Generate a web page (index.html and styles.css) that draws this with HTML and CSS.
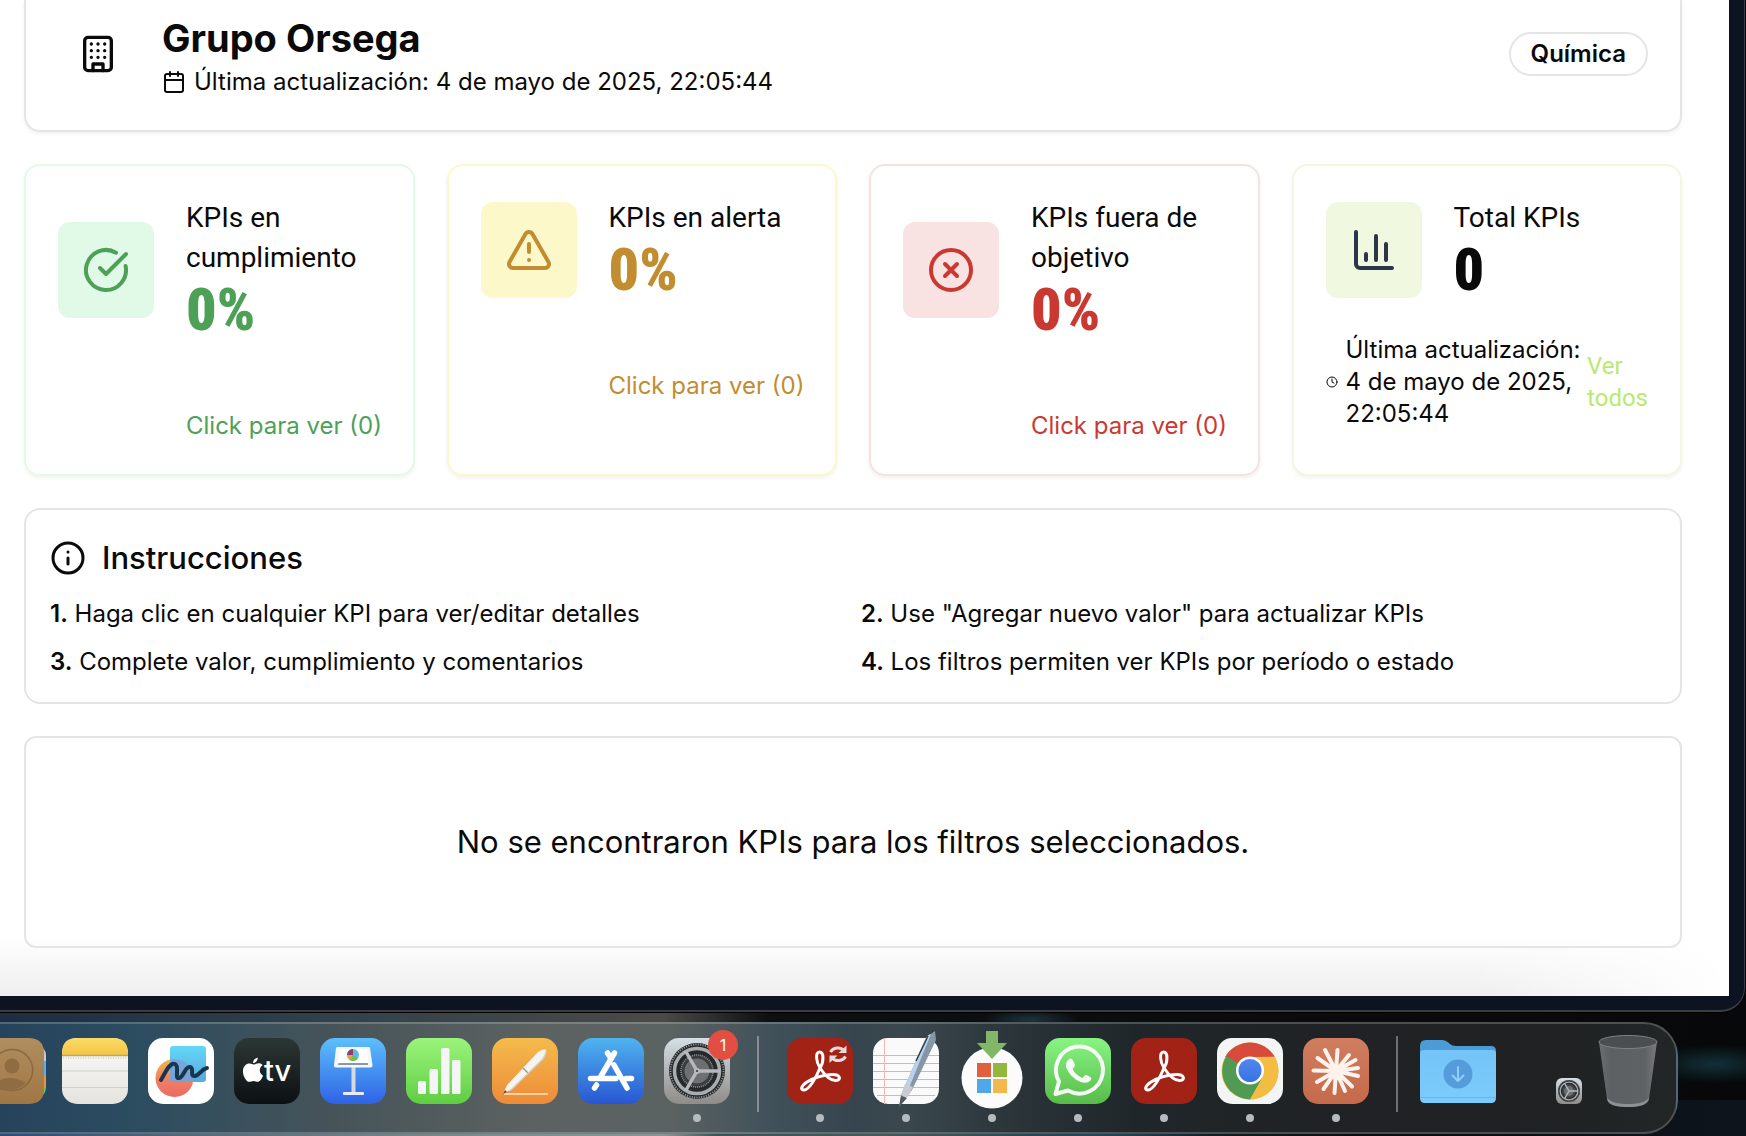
FILE: index.html
```html
<!DOCTYPE html>
<html lang="es">
<head>
<meta charset="utf-8">
<title>Grupo Orsega</title>
<link rel="stylesheet" href="styles.css">
</head>
<body>
<svg class="defs" width="0" height="0" aria-hidden="true">
  <defs>
    <linearGradient id="g-contacts" x1="0" y1="0" x2="0" y2="1"><stop offset="0" stop-color="#b08e5f"/><stop offset="1" stop-color="#a07645"/></linearGradient>
    <linearGradient id="g-notes" x1="0" y1="0" x2="0" y2="1"><stop offset="0" stop-color="#fadb66"/><stop offset="1" stop-color="#f5c544"/></linearGradient>
    <linearGradient id="g-paper" x1="0" y1="0" x2="0" y2="1"><stop offset="0" stop-color="#fbfbfa"/><stop offset="1" stop-color="#e4e3de"/></linearGradient>
    <linearGradient id="g-sun" x1="0" y1="0" x2="0" y2="1"><stop offset="0" stop-color="#f2b548"/><stop offset=".5" stop-color="#f08362"/><stop offset="1" stop-color="#ea6a66"/></linearGradient>
    <linearGradient id="g-sky" x1="0" y1="0" x2="0" y2="1"><stop offset="0" stop-color="#62d8f8"/><stop offset="1" stop-color="#5aa9dc"/></linearGradient>
    <linearGradient id="g-tv" x1="0" y1="0" x2="0" y2="1"><stop offset="0" stop-color="#2c3735"/><stop offset="1" stop-color="#0c1013"/></linearGradient>
    <linearGradient id="g-keynote" x1="0" y1="0" x2="0" y2="1"><stop offset="0" stop-color="#5cc0fb"/><stop offset="1" stop-color="#2f62e6"/></linearGradient>
    <linearGradient id="g-numbers" x1="0" y1="0" x2="0" y2="1"><stop offset="0" stop-color="#9bf47c"/><stop offset="1" stop-color="#5fce41"/></linearGradient>
    <linearGradient id="g-pages" x1="0" y1="0" x2="0" y2="1"><stop offset="0" stop-color="#f4bb4c"/><stop offset="1" stop-color="#ee8b38"/></linearGradient>
    <linearGradient id="g-store" x1="0" y1="0" x2="0" y2="1"><stop offset="0" stop-color="#4fb4ee"/><stop offset="1" stop-color="#2856d3"/></linearGradient>
    <linearGradient id="g-metal" x1="0" y1="0" x2="0" y2="1"><stop offset="0" stop-color="#d5dfe5"/><stop offset="1" stop-color="#8f8c89"/></linearGradient>
    <linearGradient id="g-wa" x1="0" y1="0" x2="0" y2="1"><stop offset="0" stop-color="#88f583"/><stop offset="1" stop-color="#57bb49"/></linearGradient>
    <linearGradient id="g-blue" x1="0" y1="0" x2="0" y2="1"><stop offset="0" stop-color="#4f87ee"/><stop offset="1" stop-color="#3a73e2"/></linearGradient>
    <linearGradient id="g-claude" x1="0" y1="0" x2="0" y2="1"><stop offset="0" stop-color="#d07d60"/><stop offset="1" stop-color="#c56a4b"/></linearGradient>
    <linearGradient id="g-folder" x1="0" y1="0" x2="0" y2="1"><stop offset="0" stop-color="#74c4f8"/><stop offset="1" stop-color="#7bcbfc"/></linearGradient>
    <linearGradient id="g-trash" x1="0" y1="0" x2="1" y2="0"><stop offset="0" stop-color="#6c6f72"/><stop offset=".2" stop-color="#5d6063"/><stop offset=".8" stop-color="#5f6265"/><stop offset="1" stop-color="#78797b"/></linearGradient>
    <symbol id="gear" viewBox="0 0 66 66">
      <rect width="66" height="66" rx="15" fill="url(#g-metal)"/>
      <circle cx="33" cy="33" r="28" fill="#26292b"/>
      <circle cx="33" cy="33" r="26.500" fill="none" stroke="#8c9092" stroke-width="2" stroke-dasharray="1.200 1.200"/>
      <circle cx="33" cy="33" r="22.500" fill="none" stroke="#a9adaf" stroke-width="3.500"/>
      <circle cx="33" cy="33" r="14.500" fill="#6d6f70" stroke="#3a3d3f" stroke-width="4"/>
      <circle cx="33" cy="33" r="16" fill="none" stroke="#8c9092" stroke-width="1.500" stroke-dasharray="1 1"/>
      <path d="M33 33H56M33 33L21.500 13M33 33L21.500 53" stroke="#b5b9bb" stroke-width="3.500"/>
      <circle cx="33" cy="33" r="3" fill="#b5b9bb"/><circle cx="33" cy="33" r="1" fill="#333"/>
    </symbol>
    <symbol id="acrobat" viewBox="0 0 66 66">
      <rect width="66" height="66" rx="15" fill="#a32216"/>
      <path d="M33 30C37 24 37 14 32.500 14C28 14 29 24 33 30C37 36 43 43 49 42.500C55 42 53 36 45 36.500C37 37 28 39 20 44C14 48 13 52 17 52C22 52 29 40 33 30Z" fill="none" stroke="#fff" stroke-width="3" stroke-linejoin="round"/>
    </symbol>
  </defs>
</svg>

<div class="window">
  <main class="page">
    <header class="card company">
      <div class="company-icon">
        <svg class="icon-40" viewBox="0 0 24 24"><rect x="4" y="2" width="16" height="20" rx="2"/><path d="M9 22v-4h6v4M8 6h.01M16 6h.01M12 6h.01M12 10h.01M12 14h.01M16 10h.01M16 14h.01M8 10h.01M8 14h.01"/></svg>
      </div>
      <div class="company-text">
        <h1>Grupo Orsega</h1>
        <p class="updated">
          <svg class="icon-24" viewBox="0 0 24 24"><path d="M8 2v4M16 2v4M3 10h18"/><rect x="3" y="4" width="18" height="18" rx="2"/></svg>
          Última actualización: 4 de mayo de 2025, 22:05:44
        </p>
      </div>
      <span class="badge">Química</span>
    </header>

    <section class="kpis">
      <article class="card kpi ok">
        <div class="kpi-head">
          <div class="tile"><svg class="icon-48" viewBox="0 0 24 24"><path d="M21.801 10A10 10 0 1 1 17 3.335"/><path d="m9 11 3 3L22 4"/></svg></div>
          <div><h2>KPIs en cumplimiento</h2><p class="value">0%</p></div>
        </div>
        <button class="view" type="button">Click para ver (0)</button>
      </article>
      <article class="card kpi warn">
        <div class="kpi-head">
          <div class="tile"><svg class="icon-48" viewBox="0 0 24 24"><path d="m21.730 18-8-14a2 2 0 0 0-3.480 0l-8 14A2 2 0 0 0 4 21h16a2 2 0 0 0 1.730-3M12 9v4M12 17h.01"/></svg></div>
          <div><h2>KPIs en alerta</h2><p class="value">0%</p></div>
        </div>
        <button class="view" type="button">Click para ver (0)</button>
      </article>
      <article class="card kpi bad">
        <div class="kpi-head">
          <div class="tile"><svg class="icon-48" viewBox="0 0 24 24"><circle cx="12" cy="12" r="10"/><path d="m15 9-6 6M9 9l6 6"/></svg></div>
          <div><h2>KPIs fuera de objetivo</h2><p class="value">0%</p></div>
        </div>
        <button class="view" type="button">Click para ver (0)</button>
      </article>
      <article class="card kpi total">
        <div class="kpi-head">
          <div class="tile"><svg class="icon-48" viewBox="0 0 24 24"><path d="M3 3v16a2 2 0 0 0 2 2h16M18 17V9M13 17V5M8 17v-3"/></svg></div>
          <div><h2>Total KPIs</h2><p class="value">0</p></div>
        </div>
        <div class="kpi-foot">
          <svg class="icon-12" viewBox="0 0 24 24"><circle cx="12" cy="12" r="10"/><path d="M12 6v6l4 2"/></svg>
          <p>Última actualización: 4 de mayo de 2025, 22:05:44</p>
          <a class="all" href="#todos">Ver todos</a>
        </div>
      </article>
    </section>

    <section class="card help">
      <h2><svg class="icon-36" viewBox="0 0 24 24"><circle cx="12" cy="12" r="10"/><path d="M12 16v-4M12 8h.01"/></svg>Instrucciones</h2>
      <div class="steps">
        <p><strong>1.</strong> Haga clic en cualquier KPI para ver/editar detalles</p>
        <p><strong>2.</strong> Use "Agregar nuevo valor" para actualizar KPIs</p>
        <p><strong>3.</strong> Complete valor, cumplimiento y comentarios</p>
        <p><strong>4.</strong> Los filtros permiten ver KPIs por período o estado</p>
      </div>
    </section>

    <section class="card empty"><p>No se encontraron KPIs para los filtros seleccionados.</p></section>
  </main>
</div>

<nav class="dock">
  <div class="apps">
    <button class="app cut" type="button" aria-label="Contactos">
      <svg width="46" height="66" viewBox="0 0 46 66"><path d="M30 8h8q8 2 8 9v6H30z" fill="#c9c9c9"/><path d="M30 23h16v14H30z" fill="#54b3ef"/><path d="M30 37h16v12H30z" fill="#f09332"/><path d="M30 49h16q0 7-6 10H30z" fill="#62d162"/><path d="M0 0h28q16 0 16 15v36q0 15-16 15H0z" fill="url(#g-contacts)"/><g fill="none" stroke="#8b683e" stroke-width="1.500"><path d="M0 15.500A20.500 20.500 0 1 1 0 48.500"/></g><circle cx="12" cy="28" r="7.500" fill="#8f6c42"/><path d="M0 42q12-5 26 3q-10 9-26 7z" fill="#8f6c42"/></svg>
    </button>
    <button class="app" type="button" aria-label="Notas">
      <svg width="66" height="66" viewBox="0 0 66 66"><rect width="66" height="66" rx="15" fill="url(#g-paper)"/><path d="M0 17V15Q0 0 15 0H51Q66 0 66 15V17Z" fill="url(#g-notes)"/><path d="M0 17.500H66" stroke="#b5a67c" stroke-width="1.500"/><path d="M1 20H65" stroke="#bdbdbd" stroke-dasharray="1 1.500"/><path d="M0 33H66M0 49.500H66" stroke="#d0d0ce"/></svg>
    </button>
    <button class="app" type="button" aria-label="Freeform">
      <svg width="66" height="66" viewBox="0 0 66 66"><rect width="66" height="66" rx="15" fill="#fff"/><circle cx="26.500" cy="40" r="19" fill="url(#g-sun)"/><rect x="22" y="8" width="36" height="36" rx="3" fill="url(#g-sky)"/><path d="M22 21.500A19 19 0 0 1 45 44H25Q22 44 22 41Z" fill="#7f9fd3" opacity=".8"/><path d="M13 42C18 33 22 24 27 26C32 28 26 41 31 40C36 39 37 28 42 29C47 30 41 39 47 38C52 37 53 31 59 30" fill="none" stroke="#17364f" stroke-width="4" stroke-linecap="round"/></svg>
    </button>
    <button class="app" type="button" aria-label="Apple TV">
      <svg width="66" height="66" viewBox="0 0 66 66"><rect width="66" height="66" rx="15" fill="url(#g-tv)"/><path d="M19.500 26.500C21.500 26.500 23 25 25.500 25.300C27 25.500 28 26.200 28.600 27.200C24.500 30 25 35.500 29 37.500C28 41 25.500 44 23.500 43.800C22 43.600 21.300 42.900 19.500 42.900C17.700 42.900 17 43.700 15.500 43.800C12 44 8.500 37 9 32.500C9.300 28 12.500 25.300 15.800 25.500C17.500 25.600 18.500 26.500 19.500 26.500ZM19 25C19 22.500 21 20 23.800 19.700C24 22.300 22 25 19 25Z" fill="#fff"/><text class="tv-text" x="30" y="43">tv</text></svg>
    </button>
    <button class="app" type="button" aria-label="Keynote">
      <svg width="66" height="66" viewBox="0 0 66 66"><rect width="66" height="66" rx="15" fill="url(#g-keynote)"/><path d="M31.500 29h4v26h-4z" fill="#d6dae0"/><rect x="23" y="54" width="21" height="3" rx="1" fill="#e8ebef"/><path d="M16 10q.3-1 1.500-1h31q1.200 0 1.500 1l2.500 17q.2 2.500-2 2.500H16q-2.300 0-2-2.500z" fill="#f4f6f8"/><path d="M20 11h27l1 14H18.500z" fill="#fff"/><path d="M18.500 25h29.500v2H18z" fill="#8b98a5"/><circle cx="33" cy="17" r="6" fill="#62b8ea"/><path d="M33 17V11A6 6 0 0 0 27 17Z" fill="#8e3f74"/><path d="M33 17H27A6 6 0 0 0 30 22Z" fill="#f0a23c"/><path d="M33 17L30 22.200A6 6 0 0 0 38 20Z" fill="#6fc04e"/></svg>
    </button>
    <button class="app" type="button" aria-label="Numbers">
      <svg width="66" height="66" viewBox="0 0 66 66"><rect width="66" height="66" rx="15" fill="url(#g-numbers)"/><g fill="#f3f6f4"><rect x="12" y="43" width="8" height="13" rx="1.500"/><rect x="23.500" y="31" width="8.500" height="25" rx="1.500"/><rect x="35" y="10" width="8.500" height="46" rx="1.500"/><rect x="46" y="22" width="8.500" height="34" rx="1.500"/></g></svg>
    </button>
    <button class="app" type="button" aria-label="Pages">
      <svg width="66" height="66" viewBox="0 0 66 66"><rect width="66" height="66" rx="15" fill="url(#g-pages)"/><path d="M12 56H56" stroke="#fbd3a4" stroke-width="2"/><path d="M11 56L15 47L46 14Q52 10 54 12Q55 15 51 21L20 51Z" fill="#f6f4f2"/><path d="M31 30l5 5" stroke="#a39a90" stroke-width="1.500"/><path d="M11 56l2-4 2 2z" fill="#5b4a3a"/><path d="M54 13Q54 17 50 22L20 51L17 53" fill="none" stroke="#d3cbc3" stroke-width="1.500"/></svg>
    </button>
    <button class="app" type="button" aria-label="App Store">
      <svg width="66" height="66" viewBox="0 0 66 66"><rect width="66" height="66" rx="15" fill="url(#g-store)"/><g stroke="#fff" stroke-width="5.500" stroke-linecap="round"><path d="M36.500 15L22.500 39M18.500 47L16.500 50M29.500 15L32 19M36 27L49 50M12.500 40.500H38M48 40.500H53.500"/></g></svg>
    </button>
    <button class="app open" type="button" aria-label="Ajustes del Sistema">
      <svg width="66" height="66"><use href="#gear"/></svg>
      <span class="count">1</span>
    </button>
  </div>
  <div class="divider"></div>
  <div class="apps">
    <button class="app open" type="button" aria-label="Acrobat Update">
      <svg width="66" height="66" viewBox="0 0 66 66"><use href="#acrobat"/><g fill="none" stroke="#e3dcdb" stroke-width="3"><path d="M43.500 14A8 7 0 0 1 57 12.500M58.500 18.500A8 7 0 0 1 45 20"/></g><path d="M59.500 7.500V15H51.500ZM42.500 25V17.500H50.500Z" fill="#e3dcdb"/></svg>
    </button>
    <button class="app open" type="button" aria-label="TextEdit">
      <svg width="66" height="66" viewBox="0 0 66 66"><rect width="66" height="66" rx="15" fill="#fafafa"/><path d="M0 17.500H66M0 25.500H66M0 33.500H66M0 41.500H66M0 49.500H66M4 57.500H62" stroke="#bfbfbf"/><path d="M11.500 0V66" stroke="#f2b8b4"/><path d="M26 69L28 57L52 2Q54-3 58-4L62-7L63 2L39 52Z" fill="#8796a6"/><path d="M30 52L52 2Q54-3 58-4L36 50Z" fill="#b9d2ea"/><path d="M43 23L55-2" stroke="#2f3f50" stroke-width="1.500"/><path d="M26 69L28 58L34 60Z" fill="#55585c"/><path d="M28 57L32 46L40 49L34 60Z" fill="#c9ccd0"/></svg>
    </button>
    <button class="app open" type="button" aria-label="Microsoft AutoUpdate">
      <svg width="66" height="66" viewBox="0 0 66 66"><circle cx="33" cy="40" r="30.500" fill="#fbfbfb"/><path d="M27-7H39V5H48L33 21L18 5H27Z" fill="#82b768"/><path d="M18 25H32V39H18Z" fill="#e05f3c"/><path d="M34 25H48V39H34Z" fill="#93b73d"/><path d="M18 41H32V55H18Z" fill="#4fa6e8"/><path d="M34 41H48V55H34Z" fill="#f2b84c"/></svg>
    </button>
    <button class="app open" type="button" aria-label="WhatsApp">
      <svg width="66" height="66" viewBox="0 0 66 66"><rect width="66" height="66" rx="15" fill="url(#g-wa)"/><path d="M10.500 56L14 43.500A23.500 23.500 0 1 1 23 52.500Z" fill="none" stroke="#f6faf5" stroke-width="4" stroke-linejoin="round"/><path d="M25 20.500Q27 20 28 22.500L30 27Q30.300 28.500 27.500 31Q30.500 37 37.500 40Q39.500 36.500 41.500 37L46 39.500Q47 41 45.500 42.500Q42 46 36 44Q25 40 21 29Q20 23.500 25 20.500Z" fill="#f6faf5"/></svg>
    </button>
    <button class="app open" type="button" aria-label="Acrobat">
      <svg width="66" height="66"><use href="#acrobat"/></svg>
    </button>
    <button class="app open" type="button" aria-label="Chrome">
      <svg width="66" height="66" viewBox="0 0 66 66"><rect width="66" height="66" rx="15" fill="#f3f4f4"/><circle cx="33" cy="33" r="28.500" fill="#f2bd42"/><path d="M33 33L8.300 18.800A28.500 28.500 0 0 1 57.700 18.800L33 19Z" fill="#d64b3b"/><path d="M33 33L9.500 18A28.500 28.500 0 0 0 33 61.500L46 40Z" fill="#509a54"/><path d="M33 19.500H58A28.500 28.500 0 0 1 33 61.500L45 40Z" fill="#f2bd42"/><circle cx="33" cy="32.500" r="14" fill="#fff"/><circle cx="33" cy="32.500" r="11.500" fill="url(#g-blue)"/></svg>
    </button>
    <button class="app open" type="button" aria-label="Claude">
      <svg width="66" height="66" viewBox="0 0 66 66"><rect width="66" height="66" rx="15" fill="url(#g-claude)"/><g stroke="#fdf3ec" stroke-width="4" stroke-linecap="round"><path d="M33 33L34.500 12M33 33L46 17M33 33L52.500 22M33 33L55 30M33 33L55 38M33 33L49 48.500M33 33L42 53M33 33L31.500 55M33 33L20.500 51M33 33L14 44M33 33L10.500 32.500M33 33L14.500 20M33 33L22 12"/></g><circle cx="33" cy="33" r="6" fill="#fdf3ec"/></svg>
    </button>
  </div>
  <div class="divider"></div>
  <div class="files">
    <button class="app wide" type="button" aria-label="Descargas">
      <svg width="76" height="66" viewBox="0 0 76 66"><path d="M0 8Q0 2 6 2H22Q26 2 30 6Q32 8 36 8H71Q76 8 76 13V30H0Z" fill="#4b9cd6"/><path d="M0 16Q0 12 4 12H72Q76 12 76 16V60Q76 65 71 65H5Q0 65 0 60Z" fill="url(#g-folder)"/><path d="M0 59.500H76" stroke="#64b5ec"/><circle cx="38" cy="36" r="14.500" fill="#569cdb"/><path d="M38 29V42.500M32.500 37.500L38 43L43.500 37.500" fill="none" stroke="#8fd0fb" stroke-width="2" stroke-linecap="round" stroke-linejoin="round"/></svg>
    </button>
    <button class="app mini" type="button" aria-label="Ajustes minimizado">
      <svg width="26" height="26"><use href="#gear"/></svg>
    </button>
    <button class="app bin" type="button" aria-label="Papelera">
      <svg width="60" height="66" viewBox="0 0 60 66"><path d="M1 4L9 61Q10 69 30 69Q49 69 51 61L59 4Z" fill="url(#g-trash)"/><path d="M9 59Q12 66 30 66Q48 66 51 59L50.500 62Q48 69 30 69Q11 69 9.500 62Z" fill="#8e9193"/><ellipse cx="30" cy="4" rx="29" ry="6.500" fill="#4b4e50" stroke="#808386"/></svg>
    </button>
  </div>
</nav>
</body>
</html>
```
FILE: styles.css
```css
* { box-sizing: border-box; }

body {
  margin: 0;
  color: #0a0a0a;
  font: 24px/32px Inter, "Liberation Sans", sans-serif;
  background:
    radial-gradient(ellipse 120px 30px at 1090px 1136px, #24465a, rgba(36, 70, 90, 0)),
    radial-gradient(ellipse 70px 20px at 1715px 1064px, #123038, rgba(18, 48, 56, 0)),
    radial-gradient(ellipse 50px 12px at 1030px 1020px, #1d333d, rgba(29, 51, 61, 0)),
    linear-gradient(to right, #1c2f40 0, #33424a 20%, #4a4a48 38%, #0d0f10 44%, #060809 100%) 0 0 / 100% 1100px no-repeat,
    linear-gradient(to right, #2b4b78 0, #4d6478 9%, #77878c 25%, #8a9696 38%, #3d5256 41%, #46585a 50%, #34494f 58%, #15252b 66%, #0a0d10 78%, #0d141b 100%);
}

h1, h2, p { margin: 0; font-weight: 400; }

button { margin: 0; padding: 0; border: 0; background: none; font: inherit; color: inherit; cursor: pointer; }

svg { display: block; flex: none; overflow: visible; }

.defs { position: absolute; }

/* Browser window */
.window {
  margin-right: 1px;
  border: solid #3a3c46;
  border-width: 0 1px 2px 0;
  border-radius: 0 0 24px 0;
  background: #0d1321;
  padding: 0 15px 14px 0;
  box-shadow: 0 1px 0 #000;
}

.page {
  display: flex;
  flex-direction: column;
  gap: 32px;
  padding: 0 47px 48px 24px;
  background:
    linear-gradient(to right, rgba(255, 255, 255, 0) 85%, #fff) bottom / 100% 60px no-repeat,
    linear-gradient(#fff, #eee) bottom / 100% 60px no-repeat,
    #fff;
}

.card { border: 2px solid #e5e5e5; border-radius: 16px; }

.icon-12, .icon-24, .icon-36, .icon-40, .icon-48 {
  fill: none;
  stroke: currentColor;
  stroke-width: 2;
  stroke-linecap: round;
  stroke-linejoin: round;
}
.icon-12 { width: 12px; height: 12px; }
.icon-24 { width: 24px; height: 24px; }
.icon-36 { width: 36px; height: 36px; }
.icon-40 { width: 40px; height: 40px; }
.icon-48 { width: 48px; height: 48px; }

/* Company header */
.company {
  display: flex;
  align-items: center;
  gap: 24px;
  padding: 10px 32px 32px;
  border-top: 0;
  border-radius: 0 0 16px 16px;
  box-shadow: 0 2px 4px rgba(0, 0, 0, .06);
}
.company-icon { padding: 20px; }
.company-text { flex: 1; }
.company h1 { font-size: 38px; line-height: 56px; font-weight: 700; }
.updated { display: flex; align-items: center; gap: 8px; }
.badge { padding: 4px 20px; border: 2px solid #e5e5e5; border-radius: 22px; font-weight: 600; }

/* KPI cards */
.kpis { display: grid; grid-template-columns: repeat(4, minmax(0, 1fr)); gap: 32px; }
.kpi { padding: 32px; box-shadow: 0 2px 4px rgba(0, 0, 0, .06); }
.kpi-head { display: flex; align-items: center; gap: 32px; }
.tile { display: flex; flex: none; padding: 24px; border-radius: 12px; }
.kpi h2 { font: 28px/40px Roboto, sans-serif; }
.value { font: 900 60px/64px "Roboto Condensed", "DejaVu Sans Condensed", sans-serif; }
.view { display: block; margin: 68px 0 0 128px; white-space: nowrap; }

.ok { border-color: #e0fbe8; }
.ok .tile { background: #e0fae7; }
.ok .tile, .ok .value, .ok .view { color: #4da156; }
.warn { border-color: #fdf8c8; }
.warn .tile { background: #fdf8ca; }
.warn .tile, .warn .value, .warn .view { color: #c18d30; }
.bad { border-color: #f9e1e1; }
.bad .tile { background: #f8e2e2; }
.bad .tile, .bad .value, .bad .view { color: #ca3931; }
.total { border-color: #f1f8df; }
.total .tile { background: #f1f8e0; color: #2b3748; }

.kpi-foot { display: flex; align-items: center; margin-top: 32px; }
.kpi-foot p { flex: 1; padding-left: 8px; }
.all { width: min-content; color: #b9e873; font-family: Roboto, sans-serif; text-decoration: none; }

/* Instructions */
.help { padding: 24px; }
.help h2 { display: flex; align-items: center; gap: 16px; font-size: 31px; line-height: 48px; font-weight: 500; }
.steps { display: grid; grid-template-columns: 1fr 1fr; gap: 16px; margin-top: 16px; }
.steps strong { font-weight: 600; }

.empty { padding: 80px 24px; border-radius: 12px; text-align: center; }
.empty p { font-size: 31px; line-height: 48px; }

/* Dock */
.dock {
  display: flex;
  align-items: flex-start;
  width: max-content;
  margin: 10px 0;
  padding: 14px 18px 20px 0;
  border: solid rgba(255, 255, 255, .2);
  border-width: 2px 2px 2px 0;
  border-radius: 0 34px 34px 0;
  background: linear-gradient(to right, #26435c 0, #2c4c60 8%, #465459 20%, #5c6261 32%, #5a6262 40%, #41515a 46%, #36454d 51%, #3a484e 54%, #293338 61%, #1f2629 68%, #202225 80%, #1f2122 90%, #222627 100%);
}
.apps { display: flex; gap: 20px; margin-right: 27px; }
.divider + .apps { margin-left: 28px; }
.app { position: relative; width: 66px; height: 66px; }
.app.cut { width: 42px; }
.open::after {
  content: "";
  position: absolute;
  top: 76px;
  left: 29px;
  width: 8px;
  height: 8px;
  border-radius: 4px;
  background: #b4bcc0;
}
.count {
  position: absolute;
  top: -8px;
  right: -8px;
  width: 30px;
  border-radius: 15px;
  background: #e24e42;
  color: #fff;
  font-size: 16px;
  line-height: 30px;
}
.tv-text { fill: #fff; font: 500 29px Inter, sans-serif; }
.divider { width: 2px; height: 76px; margin-top: -2px; background: rgba(255, 255, 255, .35); }
.files { display: flex; align-items: flex-end; margin-left: 22px; }
.app.wide { width: 76px; margin-right: 60px; }
.app.mini { width: 26px; height: 26px; margin-right: 16px; }
.app.bin { width: 60px; }
```
